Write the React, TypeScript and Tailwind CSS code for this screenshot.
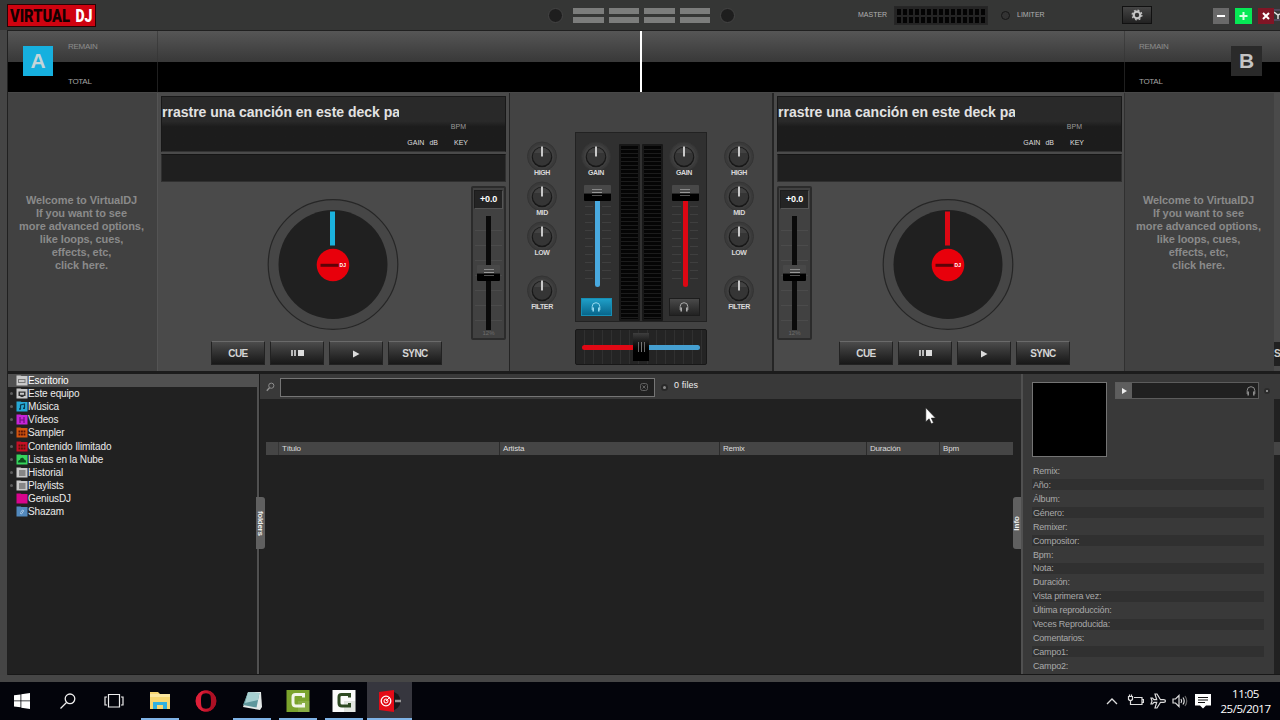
import React from 'react'

const folders = [
  { name: 'Escritorio', color: '#c9c9c9', kind: 'desk', open: false },
  { name: 'Este equipo', color: '#c9c9c9', kind: 'pc', open: true },
  { name: 'Música', color: '#27a9d6', kind: 'note', open: true },
  { name: 'Vídeos', color: '#c524d8', kind: 'film', open: true },
  { name: 'Sampler', color: '#d3560f', kind: 'grid', open: true },
  { name: 'Contenido Ilimitado', color: '#c80f26', kind: 'grid', open: true },
  { name: 'Listas en la Nube', color: '#35d45c', kind: 'cloud', open: true },
  { name: 'Historial', color: '#c9c9c9', kind: 'list', open: true },
  { name: 'Playlists', color: '#c9c9c9', kind: 'list', open: true },
  { name: 'GeniusDJ', color: '#d8048c', kind: 'none', open: false },
  { name: 'Shazam', color: '#5289bd', kind: 'shazam', open: false },
]

const fields = [
  'Remix:', 'Año:', 'Álbum:', 'Género:', 'Remixer:', 'Compositor:', 'Bpm:', 'Nota:', 'Duración:',
  'Vista primera vez:', 'Última reproducción:', 'Veces Reproducida:', 'Comentarios:', 'Campo1:', 'Campo2:',
]

function FolderIcon({ color, kind }: { color: string; kind: string }) {
  return (
    <svg width="12" height="11" viewBox="0 0 12 11" className="shrink-0">
      <path d="M0.5 0.500h4l1 0.500h6v9.500h-11z" fill={color} />
      {kind === 'desk' && <path d="M2 4h7.5v4H2z M3 5v2h5.5V5z" fill="#777" fillRule="evenodd" />}
      {kind === 'pc' && <path d="M2.5 3.5h7v4.5h-2v1h-3v-1h-2z M4 4.7v2h4v-2z" fill="#333" fillRule="evenodd" />}
      {kind === 'note' && <path d="M4.5 8V4l4-1v4" stroke="#0b3c50" fill="none" strokeWidth="1.2" />}
      {kind === 'note' && <path d="M3 7.2h2v1.5H3z M7 6.4h2v1.5H7z" fill="#0b3c50" />}
      {kind === 'film' && <path d="M4 3v6M8 3v6M4 6h4" stroke="#6d0f7b" strokeWidth="1.2" />}
      {kind === 'grid' && <path d="M2.5 4.6h7M2.5 7.6h7" stroke="#5a1408" strokeWidth="2" strokeDasharray="1.9 0.6" />}
      {kind === 'cloud' && <path d="M2 8.5c0-2 1-2.5 2-2.5 0-3 4-3 4-.5 1.500 0 2 1 2 3z" fill="#0d4a1c" />}
      {kind === 'list' && <path d="M3 4h6.500M3 6h6.500M3 8h6.500" stroke="#444" strokeWidth="1.1" />}
      {kind === 'shazam' && <path d="M4.500 6.500l2-2.500 1.500 1M7.500 5l-2 3-1.500-1" stroke="#a9c6e2" fill="none" />}
    </svg>
  )
}

function Knob({ label }: { label: string }) {
  return (
    <div className="flex h-[37px] w-8 flex-col items-center">
      <svg width="32" height="31" viewBox="0 0 32 31" className="shrink-0">
        <circle cx="16" cy="15.500" r="14.500" fill="#3a3a3a" stroke="#343434" />
        <circle cx="16" cy="15.500" r="12" fill="#404040" />
        <circle cx="16" cy="16" r="10.300" fill="#181818" />
        <circle cx="16" cy="15.500" r="9.200" fill="#353535" />
        <path d="M8 12a9 9 0 0 1 16 0z" fill="#424242" />
        <path d="M16 5.500v10" stroke="#c9c9c9" strokeWidth="2" />
      </svg>
      <div className="-mt-[3px] text-[7px] leading-[7px] font-bold tracking-[-0.4px] text-[#d8d8d8]">{label}</div>
    </div>
  )
}

function Headphones({ className }: { className: string }) {
  return (
    <svg width="12" height="12" viewBox="0 0 12 12" fill="none" className={className}>
      <path d="M2.200 9V5.500a3.800 3.800 0 0 1 7.600 0V9" stroke="currentColor" strokeWidth="1" />
      <path d="M3.200 6.500v4M8.800 6.500v4" stroke="currentColor" strokeWidth="1.600" />
    </svg>
  )
}

function FaderCap() {
  return (
    <div className="flex h-[16px] w-full shrink-0 flex-col items-center gap-[2px] rounded-[1px] bg-linear-to-b from-[#484848] from-50% to-black to-60% pt-[4px]">
      <div className="h-px w-[10px] bg-[#888]" />
      <div className="h-px w-[10px] bg-[#999]" />
      <div className="h-px w-[10px] bg-[#555]" />
    </div>
  )
}

function Channel({ side }: { side: 'A' | 'B' }) {
  const a = side === 'A'
  return (
    <div className={a ? 'flex w-[43px] shrink-0 flex-col items-center pr-[3px]' : 'flex w-[43px] shrink-0 flex-col items-center pr-px'}>
      <div className="mt-[8px]"><Knob label="GAIN" /></div>
      <div className="mt-[7px] flex h-[105px] w-full flex-col items-center bg-[repeating-linear-gradient(#3f3f3f_0_1px,transparent_1px_8px)] bg-size-[26px_80px] bg-position-[9px_21px] bg-no-repeat">
        <div className="ml-[2px] w-[27px]"><FaderCap /></div>
        <div className="ml-[3px] flex w-[9px] justify-center bg-[#303030]">
          <div className={a ? 'h-[86px] w-[5px] rounded-b bg-[#49a9df]' : 'h-[86px] w-[5px] rounded-b bg-[#dc0713]'} />
        </div>
      </div>
      <div
        className={
          a
            ? 'mt-[8px] flex h-[18px] w-[31px] items-center justify-center border border-[#168eb4] bg-linear-to-b from-[#1f9fc8] to-[#08668b] text-[#93d8ef]'
            : 'mt-[8px] flex h-[18px] w-[31px] items-center justify-center border border-[#1d1d1d] bg-linear-to-b from-[#4a4a4a] to-[#222] text-[#aaa]'
        }
      >
        <Headphones className="" />
      </div>
    </div>
  )
}

function Meter() {
  return (
    <div className="mt-[11px] h-[177px] w-[21px] rounded-[1px] border-2 border-[#181818] bg-[repeating-linear-gradient(#050505_0_3px,#1c1c1c_3px_4px)]" />
  )
}

function Eq() {
  return (
    <div className="flex w-[64px] shrink-0 flex-col items-center pt-[48px]">
      <Knob label="HIGH" />
      <div className="mt-[3px]"><Knob label="MID" /></div>
      <div className="mt-[3px]"><Knob label="LOW" /></div>
      <div className="mt-[17px]"><Knob label="FILTER" /></div>
    </div>
  )
}

function Mixer() {
  return (
    <div className="flex w-[264px] shrink-0 border-r-2 border-[#252525] bg-[#434343]">
      <Eq />
      <div className="w-[133px] shrink-0 pt-[39px] pl-px">
        <div className="flex h-[190px] w-[132px] border border-[#222] bg-[#303030]">
          <Channel side="A" />
          <div className="flex gap-[2px]">
            <Meter />
            <Meter />
          </div>
          <Channel side="B" />
        </div>
        <div className="mt-[7px] flex h-[36px] w-[132px] items-center justify-center rounded-xs border border-[#181818] bg-[#242424] bg-[repeating-linear-gradient(90deg,transparent_0_8px,#303030_8px_9px)]">
          <div className="h-[5px] w-[51px] rounded-l bg-[#e00814]" />
          <div className="flex h-[28px] w-[16px] justify-center gap-[2px] bg-linear-to-b from-[#3e3e3e] to-black to-80% pt-[9px]">
            <div className="h-[10px] w-px bg-[#666]" />
            <div className="h-[10px] w-px bg-[#777]" />
            <div className="h-[10px] w-px bg-[#666]" />
          </div>
          <div className="h-[5px] w-[51px] rounded-r bg-[#459fd0]" />
        </div>
      </div>
      <Eq />
    </div>
  )
}

function Pitch() {
  return (
    <div className="flex h-[154px] w-[35px] shrink-0 flex-col items-center rounded-xs border-2 border-[#2b2b2b] bg-[#414141] pt-[2px]">
      <div className="flex h-[19px] w-[29px] items-center justify-center border border-[#555] border-t-[#1c1c1c] border-l-[#1c1c1c] bg-[#242424] text-[9px] font-bold tracking-[-0.2px] text-white">
        +0.0
      </div>
      <div className="mt-[7px] flex h-[114px] w-[27px] flex-col items-center bg-[repeating-linear-gradient(transparent_0_14px,#4b4b4b_14px_15px)]">
        <div className="h-[49px] w-[5px] bg-[#0a0a0a]" />
        <div className="w-[23px]"><FaderCap /></div>
        <div className="h-[49px] w-[5px] bg-[#0a0a0a]" />
      </div>
      <div className="text-[6px] leading-[7px] text-[#6d6d6d]">12%</div>
    </div>
  )
}

function Jog({ color }: { color: string }) {
  return (
    <svg width="132" height="132" viewBox="0 0 132 132" className="shrink-0">
      <circle cx="66" cy="65.500" r="64.800" fill="#464646" stroke="#262626" strokeWidth="1.200" />
      <circle cx="66" cy="65.500" r="54.500" fill="#202020" />
      <path d="M65.500 12.500v34" stroke={color} strokeWidth="5" />
      <circle cx="66" cy="66" r="16.300" fill="#e8000b" />
      <path d="M53.500 66.300h18" stroke="#5e0308" strokeWidth="3" />
      <text x="72.500" y="68" fontSize="5" fontWeight="bold" fill="#fff" textLength="6.500">DJ</text>
    </svg>
  )
}

function DeckButton({ children }: { children: React.ReactNode }) {
  return (
    <div className="flex h-[24px] w-[54px] items-center justify-center border border-[#222] border-t-[#6a6a6a] bg-linear-to-b from-[#4c4c4c] to-[#181818] text-[10px] font-bold tracking-[-0.6px] text-[#d5d5d5]">
      {children}
    </div>
  )
}

function Deck({ side }: { side: 'A' | 'B' }) {
  const a = side === 'A'
  return (
    <div
      className={
        a
          ? 'flex w-[353px] shrink-0 flex-col border-r border-l border-r-[#242424] border-l-[#545454] bg-[#4a4a4a] pt-[3px] pl-[3px]'
          : 'flex w-[351px] shrink-0 flex-col border-r border-[#303030] bg-[#4a4a4a] pt-[3px] pl-[3px]'
      }
    >
      <div className="h-[56px] w-[345px] border border-[#181818] border-b-[#333] bg-linear-to-b from-[#292929] from-45% to-[#1c1c1c] to-55%">
        <div className="flex h-[30px] w-[237px] items-center overflow-hidden text-[14px] font-bold whitespace-nowrap text-[#e2e2e2]">
          rrastre una canción en este deck pa
        </div>
        <div className="-mt-[4px] pr-[39px] text-right text-[7px] leading-[8px] text-[#999]">BPM</div>
        <div className="mt-[8px] flex items-center justify-end pr-[37px] text-[7px] leading-[8px] text-[#dedede]">
          <span>GAIN</span>
          <span className="ml-[5px]">dB</span>
          <span className="ml-[16px]">KEY</span>
        </div>
      </div>
      <div className="mt-[2px] h-[28px] w-[345px] border border-[#303030] border-t-[#151515] bg-[#1f1f1f]" />
      <div className={a ? 'mt-[4px] flex w-[345px]' : 'mt-[4px] flex w-[345px] flex-row-reverse'}>
        <div className="w-[310px]">
          <div className={a ? 'mt-[13px] pl-[106px]' : 'mt-[13px] pl-[70px]'}>
            <Jog color={a ? '#1bb2dd' : '#dc0713'} />
          </div>
          <div className={a ? 'mt-[10px] flex gap-[5px] pl-[50px]' : 'mt-[10px] flex gap-[5px] pl-[27px]'}>
            <DeckButton>CUE</DeckButton>
            <DeckButton>
              <span className="h-[6px] w-[2px] bg-[#bbb]" />
              <span className="ml-px h-[6px] w-[2px] bg-[#bbb]" />
              <span className="ml-[2px] h-[6px] w-[6px] bg-[#ddd]" />
            </DeckButton>
            <DeckButton>
              <svg width="8" height="8" viewBox="0 0 8 8" className="mt-px"><path d="M1 0.500l6.500 3.500L1 7.500z" fill="#ddd" /></svg>
            </DeckButton>
            <DeckButton>SYNC</DeckButton>
          </div>
        </div>
        <Pitch />
      </div>
    </div>
  )
}

function Welcome() {
  return (
    <div className="w-[149px] shrink-0 bg-[#414141] pt-[101px] pr-[2px] text-center text-[11px] leading-[13.1px] font-bold tracking-[-0.080px] text-[#8a8a8a]">
      Welcome to VirtualDJ
      <br />If you want to see
      <br />more advanced options,
      <br />like loops, cues,
      <br />effects, etc,
      <br />click here.
    </div>
  )
}

function Header() {
  return (
    <div className="flex h-[30px] shrink-0 items-center bg-[#353635]">
      <svg width="89" height="23" viewBox="0 0 89 23" className="ml-[7px] shrink-0">
        <rect x="0.500" y="0.500" width="88" height="22" fill="#cf0310" stroke="#2a0204" />
        <text x="3" y="18" fontFamily="Roboto" fontWeight="900" fontSize="18" fill="#150000" textLength="60" lengthAdjust="spacingAndGlyphs">VIRTUAL</text>
        <text x="68.500" y="18" fontFamily="Roboto" fontWeight="900" fontSize="18" fill="#fff" textLength="17" lengthAdjust="spacingAndGlyphs">DJ</text>
      </svg>
      <div className="ml-[452px] h-[15px] w-[15px] rounded-full border border-[#444] bg-[#1e1e1e]" />
      <div className="ml-[10px] grid grid-cols-4 gap-x-[5px] gap-y-[3px]">
        {Array.from({ length: 8 }, (_, i) => (
          <div key={i} className="h-[6px] w-[30.500px] bg-[#7c7d7c]" />
        ))}
      </div>
      <div className="ml-[10px] h-[15px] w-[15px] rounded-full border border-[#444] bg-[#1e1e1e]" />
      <div className="ml-[123px] w-[36px] text-[7px] text-[#b0b0b0]">MASTER</div>
      <div className="mt-px flex h-[19px] w-[94px] flex-col justify-center gap-[2px] border border-[#262626] bg-[#242424] px-[2px]">
        <div className="h-[6px] bg-[repeating-linear-gradient(90deg,#040404_0_4px,#242424_4px_6px)]" />
        <div className="h-[6px] bg-[repeating-linear-gradient(90deg,#040404_0_4px,#242424_4px_6px)]" />
      </div>
      <div className="ml-[13px] h-[9px] w-[9px] rounded-full border border-[#161616] bg-[#333]" />
      <div className="ml-[7px] w-[30px] text-[7px] text-[#b0b0b0]">LIMITER</div>
      <div className="ml-[75px] flex h-[18px] w-[30px] items-center justify-center border border-[#111] bg-linear-to-b from-[#454545] to-[#222]">
        <svg width="12" height="12" viewBox="0 0 12 12" fill="none" stroke="#c6c6c6">
          <circle cx="6" cy="6" r="3.300" strokeWidth="2.200" />
          <circle cx="6" cy="6" r="4.900" strokeWidth="1.200" strokeDasharray="1.900 1.950" />
        </svg>
      </div>
      <div className="mt-px ml-[61px] flex gap-[6px]">
        <div className="flex h-[16px] w-[16px] items-center justify-center bg-[#696969]"><span className="h-[2px] w-[8px] bg-white" /></div>
        <svg width="17" height="16" viewBox="0 0 17 16"><path d="M0 0h17v16H0z" fill="#06e955" /><path d="M8.500 4v8M4.500 8h8" stroke="#d6ffe1" strokeWidth="2" /></svg>
        <svg width="16" height="16" viewBox="0 0 16 16"><path d="M0 0h16v16H0z" fill="#801525" /><path d="M5 5l6 6M11 5l-6 6" stroke="#fff" strokeWidth="2" /></svg>
      </div>
      <svg width="6" height="12" viewBox="0 0 6 12" className="shrink-0"><path d="M0 1h6M0 11h6" stroke="#6c5a86" /><path d="M0 3l4 3 2-1M4 6v4" stroke="#ddd" strokeWidth="1.500" fill="none" /></svg>
    </div>
  )
}

function Waveform() {
  return (
    <div className="relative flex h-[63px] shrink-0 border-t border-b border-t-[#202020] border-b-[#484848] bg-linear-to-b from-[#565656] via-[#393939] via-50% to-black to-50% text-[8px] leading-[10px] text-[#a5a5a5]">
      <div className="flex w-[150px] border-r border-[#333]/60 pt-[10px]">
        <div className="mt-[5px] ml-[15px] flex h-[30px] w-[30px] items-center justify-center bg-[#16b0df] text-[21px] font-bold text-[#c5d5d9]">A</div>
        <div className="ml-[15px] pt-px">
          <div className="tracking-[-0.250px] text-[#8d8d8d]">REMAIN</div>
          <div className="mt-[25px] tracking-[-0.300px]">TOTAL</div>
        </div>
      </div>
      <div className="w-[967px] border-r border-[#333]/60" />
      <div className="flex pt-[10px]">
        <div className="ml-[14px] w-[92px] pt-px">
          <div className="tracking-[-0.250px] text-[#8d8d8d]">REMAIN</div>
          <div className="mt-[25px] tracking-[-0.300px]">TOTAL</div>
        </div>
        <div className="mt-[5px] flex h-[30px] w-[31px] items-center justify-center bg-[#2a2a2a] text-[21px] font-bold text-[#c4c4c4]">B</div>
      </div>
      <div className="absolute top-0 left-[632px] h-[61px] w-[2px] bg-white" />
    </div>
  )
}

function Sidebar() {
  return (
    <div className="relative w-[251px] shrink-0 border-r-2 border-[#505050] bg-[#212121]">
      {folders.map((f, i) => (
        <div
          key={f.name}
          className={
            i === 0
              ? 'flex h-[13.100px] items-center bg-[#505050] text-[10px] leading-[13px] tracking-[-0.120px] text-white'
              : 'flex h-[13.100px] items-center text-[10px] leading-[13px] tracking-[-0.120px] text-[#ececec]'
          }
        >
          <span className="w-[8px] pl-[2px]">
            {f.open && <span className="block h-[3px] w-[3px] rounded-full bg-[#5c5c5c]" />}
          </span>
          <FolderIcon color={f.color} kind={f.kind} />
          <span className="whitespace-nowrap">{f.name}</span>
        </div>
      ))}
      <div className="absolute top-[123px] -right-[8px] z-10 flex h-[52px] w-[9px] items-center justify-center rounded-r-[3px] bg-[#606060]">
        <span className="text-[8px] leading-[9px] font-bold tracking-[-0.300px] text-[#eee] [writing-mode:vertical-rl]">folders</span>
      </div>
    </div>
  )
}

function Files() {
  return (
    <div className="relative w-[762px] shrink-0 border-l border-[#1a1a1a] bg-[#212121]">
      <div className="flex h-[25px] items-center bg-[#393939]">
        <svg width="9" height="10" viewBox="0 0 9 10" fill="none" stroke="#8d8d8d" className="mt-px ml-[6px]">
          <circle cx="5.300" cy="3.700" r="2.600" />
          <path d="M3.500 5.700L0.800 8.800" strokeWidth="1.400" />
        </svg>
        <div className="mt-px ml-[5px] flex h-[19px] w-[375px] items-center justify-end border border-[#757575] bg-[#202020] pr-[6px]">
          <svg width="8" height="8" viewBox="0 0 8 8" fill="none" stroke="#606060"><rect x="0.500" y="0.500" width="7" height="7" rx="2" /><path d="M2.500 2.500l3 3M5.500 2.500l-3 3" /></svg>
        </div>
        <div className="mt-px ml-[6px] flex h-[7px] w-[7px] items-center justify-center rounded-full bg-[#292929]"><div className="h-[3px] w-[3px] rounded-full bg-[#8a8a8a]" /></div>
        <div className="ml-[6px] pb-px text-[9px] tracking-[0.100px] text-[#eee]">0 files</div>
      </div>
      <div className="mt-[43px] ml-[6px] flex h-[13px] w-[747px] bg-[#454545] text-[8px] leading-[13px] tracking-[-0.200px] text-[#ddd]">
        <div className="w-[13px] border-r border-[#353535]" />
        <div className="w-[221px] border-r border-[#2b2b2b] pl-[3px]">Título</div>
        <div className="w-[220px] border-r border-[#2b2b2b] pl-[3px]">Artista</div>
        <div className="w-[147px] border-r border-[#2b2b2b] pl-[3px]">Remix</div>
        <div className="w-[73px] border-r border-[#2b2b2b] pl-[3px]">Duración</div>
        <div className="pl-[3px]">Bpm</div>
      </div>
      <div className="absolute top-[123px] right-0 flex h-[52px] w-[8px] items-center justify-center rounded-l-[3px] bg-[#606060]">
        <span className="rotate-180 text-[8px] leading-[8px] font-bold text-[#eee] [writing-mode:vertical-rl]">Info</span>
      </div>
    </div>
  )
}

function Info() {
  return (
    <div className="w-[253px] shrink-0 overflow-hidden border-l-2 border-[#505050] bg-[#393939] pt-[8px] pl-[9px]">
      <div className="flex">
        <div className="h-[75px] w-[75px] border border-[#747474] bg-black" />
        <div className="ml-[8px] flex h-[17px] w-[144px] items-center border border-[#5c5c5c] bg-[#202020]">
          <div className="flex h-[15px] w-[16px] items-center justify-center bg-[#5e5e5e]">
            <svg width="5" height="6" viewBox="0 0 5 6"><path d="M0 0l5 3-5 3z" fill="#eee" /></svg>
          </div>
          <Headphones className="mr-px ml-auto text-[#8c8c8c]" />
        </div>
        <div className="mt-[6px] ml-[5px] flex h-[6px] w-[6px] items-center justify-center rounded-full bg-[#2b2b2b]"><div className="h-[2px] w-[2px] bg-[#888]" /></div>
      </div>
      <div className="mt-[7px] w-[232px]">
        {fields.map((f, i) => (
          <div
            key={f}
            className={
              i % 2
                ? 'h-[13.930px] bg-[linear-gradient(#303030,#303030)] bg-size-[100%_11px] bg-center bg-no-repeat pl-px text-[9px] leading-[14px] tracking-[-0.200px] text-[#a9a9a9]'
                : 'h-[13.930px] pl-px text-[9px] leading-[14px] tracking-[-0.200px] text-[#a9a9a9]'
            }
          >
            {f}
          </div>
        ))}
      </div>
    </div>
  )
}

function Task({ running, active, children }: { running?: boolean; active?: boolean; children: React.ReactNode }) {
  return (
    <div className={active ? 'flex w-[45px] flex-col items-center bg-[#36363e]' : 'flex w-[46px] flex-col items-center'}>
      <div className="flex h-[36px] items-center justify-center pt-[2px]">{children}</div>
      <div className={active ? 'h-[2px] w-full bg-[#7fb3e6]' : running ? 'h-[2px] w-[38px] bg-[#7fb3e6]' : 'h-[2px]'} />
    </div>
  )
}

function Camtasia({ bg, fg }: { bg: string; fg: string }) {
  return (
    <svg width="24" height="22" viewBox="0 0 24 22">
      <path d="M0.500 0h23v22h-23z" fill={bg} />
      <path d="M12 11h11.500v11H12z" fill={fg} opacity="0.120" />
      <path d="M17.500 7.500V4.500h-8q-2.500 0-2.500 2.500v6q0 3 3 3h7.500v-3" stroke={fg} strokeWidth="3" fill="none" />
    </svg>
  )
}

function Taskbar() {
  return (
    <div className="flex h-[38px] shrink-0 bg-[#03040b] font-['Open_Sans',sans-serif]">
      <div className="-ml-px flex">
        <Task>
          <svg width="16" height="16" viewBox="0 0 16 16" fill="#fff"><path d="M0 2.300l6.500-.9v6H0zM7.300 1.300L16 0v7.400H7.300zM0 8.300h6.500v6L0 13.500zM7.300 8.300H16V16l-8.700-1.300z" /></svg>
        </Task>
        <Task>
          <svg width="16" height="16" viewBox="0 0 16 16" fill="none" stroke="#eee" strokeWidth="1.300"><circle cx="10" cy="5.800" r="4.800" /><path d="M6.500 9.500L0.500 15.500" /></svg>
        </Task>
        <Task>
          <svg width="20" height="16" viewBox="0 0 20 16" fill="none" stroke="#eee" strokeWidth="1.200"><path d="M4.500 1.500h11v12.500h-11zM3 4H1v8h2M17 4h2v8h-2" /></svg>
        </Task>
        <Task running>
          <svg width="22" height="18" viewBox="0 0 22 18"><path d="M1 0h8l2 2h10v15H1z" fill="#f6d671" /><path d="M1 2h20v3H1z" fill="#fbe79f" /><path d="M4 17V10h14v7h-4v-4H8v4z" fill="#2fb0e0" /></svg>
        </Task>
        <Task>
          <svg width="22" height="22" viewBox="0 0 22 22"><ellipse cx="11" cy="11" rx="8.500" ry="9.200" fill="none" stroke="#c9152d" strokeWidth="3" /><path d="M11 .5a10.500 10.500 0 0 0 0 21c-4-1-5-5-5-10.500S7 1.500 11 .5z" fill="#dd1f38" /><path d="M11 .5a10.500 10.500 0 0 1 0 21c4-1 5-5 5-10.500S15 1.500 11 .5z" fill="#ad1024" /></svg>
        </Task>
        <Task running>
          <svg width="22" height="20" viewBox="0 0 22 20"><path d="M7 1l13 0 1 15-2 3-17-3z" fill="#e3e9e8" /><path d="M7 1.500l11.500.5-3 14.500L2 14z" fill="#5f979c" /><path d="M7 1.500l11.500.5-1.500 7L4 12z" fill="#a6cfd0" /></svg>
        </Task>
        <Task running><Camtasia bg="#7ba32d" fg="#f2f5e8" /></Task>
        <Task running><Camtasia bg="#fbfbfb" fg="#2e4a22" /></Task>
        <Task active>
          <svg width="24" height="22" viewBox="0 0 24 22">
            <circle cx="13" cy="11" r="9.500" fill="#18181b" />
            <path d="M17 11h6" stroke="#999" strokeWidth="2.500" />
            <path d="M1 2l15-2v22L1 20z" fill="#e30b17" />
            <circle cx="8" cy="11" r="4.800" fill="none" stroke="#fff" strokeWidth="1.300" />
            <circle cx="8" cy="11" r="2" fill="none" stroke="#fff" />
            <path d="M8 11l4-4" stroke="#fff" />
          </svg>
        </Task>
      </div>
      <div className="mr-[9px] ml-auto flex items-center text-white">
        <svg width="12" height="8" viewBox="0 0 12 8" fill="none" stroke="#ddd" strokeWidth="1.300"><path d="M1 7l5-5 5 5" /></svg>
        <svg width="17" height="14" viewBox="0 0 17 14" fill="none" stroke="#ddd" strokeWidth="1.200" className="ml-[9px]"><path d="M7 3.500h8v7H6M15 5.500h1.500v3H15M1.500 2.500h4v3q-2 2-4 0zM2.500 0.500v2M4.500 0.500v2M3.500 6.500v4h3" /></svg>
        <svg width="17" height="16" viewBox="0 0 17 16" fill="none" stroke="#ddd" strokeWidth="1.200" className="ml-[6px]"><path d="M15.500 8q0-1.300-2-1.300h-3L7 1H5l1.700 5.700H4L2.500 5H1l1 3-1 3h1.500L4 9.300h2.700L5 15h2l3.500-5.700h3q2 0 2-1.300z" /></svg>
        <svg width="16" height="14" viewBox="0 0 16 14" fill="none" stroke="#ddd" strokeWidth="1.200" className="ml-[5px]"><path d="M1 5h2.500L7 1.500v11L3.500 9H1zM9 5q1.300 2 0 4M11 3.500q2.400 3.500 0 7" /><path d="M13 2q3.500 5 0 10" stroke="#666" /></svg>
        <svg width="16" height="16" viewBox="0 0 16 16" className="ml-[7px]"><path d="M0 1h16v11.500h-5L8 15.500l-3-3H0z" fill="#fff" /><path d="M3 4.500h10M3 7h10M3 9.500h7" stroke="#111" /></svg>
        <div className="ml-[9px] w-[51px] text-center text-[11.500px] leading-[15.500px] tracking-[-0.500px] whitespace-nowrap">
          <div>11:05</div>
          <div>25/5/2017</div>
        </div>
      </div>
    </div>
  )
}

export default function App() {
  return (
    <div className="relative flex h-[720px] w-[1280px] flex-col overflow-hidden bg-[#444] font-['Liberation_Sans',Arial,sans-serif]">
      <Header />
      <div className="flex h-[645px] shrink-0">
        <div className="w-[8px] shrink-0 border-r border-[#202020] bg-[#454545]" />
        <div className="flex w-[1272px] flex-col">
          <Waveform />
          <div className="flex h-[280px] shrink-0 border-b-2 border-[#1c1c1c] bg-[#414141]">
            <Welcome />
            <Deck side="A" />
            <Mixer />
            <Deck side="B" />
            <Welcome />
            {/* strip of the window behind the skin */}
            <div className="flex grow flex-col bg-[#4a4a4a] pt-[249px]">
              <div className="h-[24px] overflow-hidden bg-[#202020] text-[10px] leading-[23px] font-bold text-[#ccc]">S</div>
            </div>
          </div>
          <div className="flex h-[302px] shrink-0 border-t border-b border-t-[#1c1c1c] border-b-[#181818] bg-[#393939]">
            <Sidebar />
            <Files />
            <Info />
            <div className="grow bg-[#212121]">
              <div className="h-[25px] bg-[#393939]" />
              <div className="mt-[43px] h-[13px] bg-[#454545]" />
            </div>
          </div>
        </div>
      </div>
      <div className="h-[7px] shrink-0 bg-[#464646]" />
      <Taskbar />
      <svg width="11" height="18" viewBox="0 0 11 18" className="absolute top-[407px] left-[925px]">
        <path d="M0.800 0.800v14l3.300-3 2.200 5 2.200-1-2.200-4.700h4.200z" fill="#fff" stroke="#222" strokeWidth="0.600" />
      </svg>
    </div>
  )
}
